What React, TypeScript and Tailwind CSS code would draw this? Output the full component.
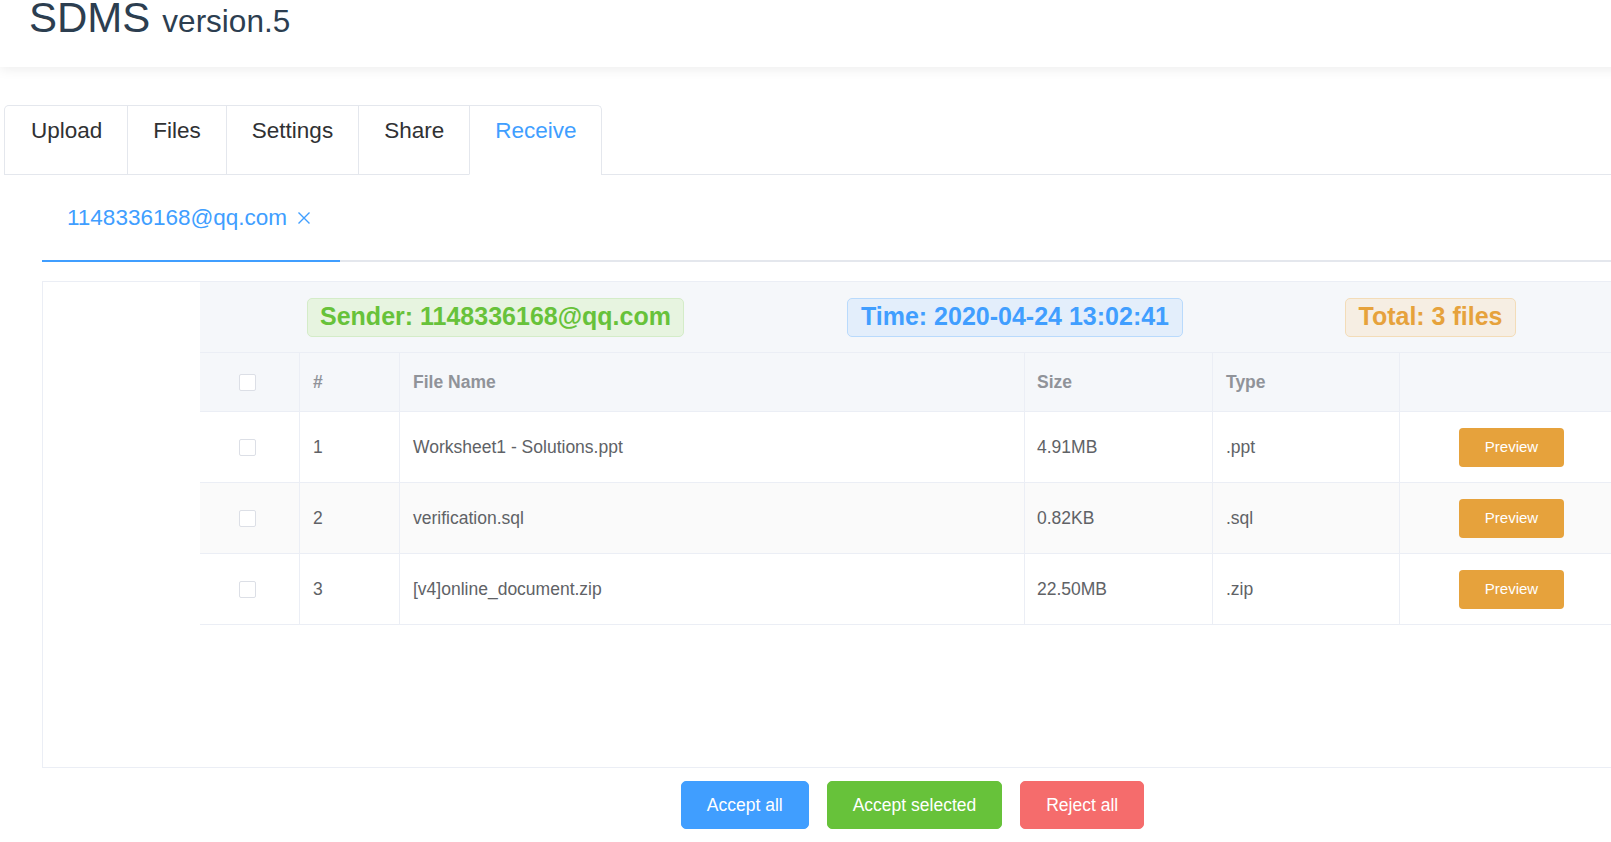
import React from 'react';

type FileRow = { id: number; name: string; size: string; type: string };

const files: FileRow[] = [
  { id: 1, name: 'Worksheet1 - Solutions.ppt', size: '4.91MB', type: '.ppt' },
  { id: 2, name: 'verification.sql', size: '0.82KB', type: '.sql' },
  { id: 3, name: '[v4]online_document.zip', size: '22.50MB', type: '.zip' },
];

const tabs = ['Upload', 'Files', 'Settings', 'Share', 'Receive'];

const Checkbox = () => (
  <span className="block w-[17px] h-[17px] rounded-[2px] border border-[#dcdfe6] bg-white" />
);

const App = () => {
  return (
    <div className="w-[1611px] h-[842px] overflow-hidden bg-white font-['Liberation_Sans',Arial,sans-serif]">
      <div className="w-[1825px]">
        {/* Header */}
        <header className="h-[67px] pl-[29px] flex items-start bg-white shadow-[0_2px_12px_0_rgba(0,0,0,0.08)] relative">
          <h1 className="flex items-baseline text-[#2c3e50]">
            <span className="text-[42px] leading-[36px]">SDMS</span>
            <span className="text-[31.5px] leading-[36px] ml-[12px]">version.5</span>
          </h1>
        </header>

        {/* Main tabs */}
        <div className="mt-[38px] ml-[4px]">
          <div className="flex border-b border-[#e4e7ed]">
            <div className="flex -mb-px border border-b-0 border-[#e4e7ed] rounded-t-[5px]">
              {tabs.map((t, i) => (
                <div
                  key={t}
                  className={`h-[69px] text-[22.5px] leading-[50px] border-b ${
                    i > 0 ? 'px-[25px] border-l border-l-[#e4e7ed]' : 'pl-[26px] pr-[25px]'
                  } ${t === 'Receive' ? 'text-[#409eff] border-b-white' : 'text-[#303133] border-b-transparent'}`}
                >
                  {t}
                </div>
              ))}
            </div>
          </div>

          <div className="pl-[38px]">
            {/* Nested tab */}
            <div className="flex border-b-2 border-[#e4e7ed]">
              <div className="-mb-[2px] h-[87px] border-b-2 border-[#409eff] pl-[25px] pr-[29px] flex items-center text-[22.5px] text-[#409eff]">
                <span>1148336168@qq.com</span>
                <svg className="ml-[10px]" width="14" height="14" viewBox="0 0 14 14" fill="none">
                  <path d="M1.5 1.5L12.5 12.5M12.5 1.5L1.5 12.5" stroke="#409eff" strokeWidth="1.4" />
                </svg>
              </div>
            </div>

            {/* Box */}
            <div className="mt-[19px] h-[487px] border border-[#ebeef5] flex">
              <div className="w-[157px] shrink-0" />
              <div className="flex-1">
                {/* Info tags */}
                <div className="h-[70px] bg-[#f5f7fa] flex items-center pl-[107px]">
                  <div className="w-[377px] h-[39px] rounded-[5px] border border-[#d4ecc8] bg-[#e7f4e0] flex items-center justify-center text-[25px] font-bold text-[#67c23a]">
                    Sender: 1148336168@qq.com
                  </div>
                  <div className="ml-[163px] w-[336px] h-[39px] rounded-[5px] border border-[#b9dafc] bg-[#e3eefb] flex items-center justify-center text-[25px] font-bold text-[#409eff]">
                    Time: 2020-04-24 13:02:41
                  </div>
                  <div className="ml-[162px] w-[171px] h-[39px] rounded-[5px] border border-[#f3dcb8] bg-[#f6eee3] flex items-center justify-center text-[25px] font-bold text-[#e6a23c]">
                    Total: 3 files
                  </div>
                </div>

                {/* Table header */}
                <div className="h-[60px] flex border-y border-[#ebeef5] bg-[#f5f7fa] text-[17.5px] font-bold text-[#909399]">
                  <div className="w-[100px] border-r border-[#ebeef5] flex items-center pl-[39px]">
                    <Checkbox />
                  </div>
                  <div className="w-[100px] border-r border-[#ebeef5] flex items-center pl-[13px]">#</div>
                  <div className="w-[625px] border-r border-[#ebeef5] flex items-center pl-[13px]">File Name</div>
                  <div className="w-[188px] border-r border-[#ebeef5] flex items-center pl-[12px]">Size</div>
                  <div className="w-[187px] border-r border-[#ebeef5] flex items-center pl-[13px]">Type</div>
                  <div className="w-[224px] border-r border-[#ebeef5]" />
                  <div className="flex-1" />
                </div>

                {/* Rows */}
                {files.map((f, i) => (
                  <div
                    key={f.id}
                    className={`h-[71px] flex border-b border-[#ebeef5] text-[17.5px] text-[#606266] ${
                      i === 1 ? 'bg-[#fafafa]' : 'bg-white'
                    }`}
                  >
                    <div className="w-[100px] border-r border-[#ebeef5] flex items-center pl-[39px]">
                      <Checkbox />
                    </div>
                    <div className="w-[100px] border-r border-[#ebeef5] flex items-center pl-[13px]">{f.id}</div>
                    <div className="w-[625px] border-r border-[#ebeef5] flex items-center pl-[13px]">{f.name}</div>
                    <div className="w-[188px] border-r border-[#ebeef5] flex items-center pl-[12px]">{f.size}</div>
                    <div className="w-[187px] border-r border-[#ebeef5] flex items-center pl-[13px]">{f.type}</div>
                    <div className="w-[224px] border-r border-[#ebeef5] flex items-center pl-[59px]">
                      <button className="w-[105px] h-[39px] rounded-[4px] bg-[#e6a23c] text-white text-[15px]">
                        Preview
                      </button>
                    </div>
                    <div className="flex-1" />
                  </div>
                ))}
              </div>
            </div>
          </div>
        </div>

        {/* Actions */}
        <div className="mt-[13px] flex justify-center gap-[18px] text-[17.5px] text-white">
          <button className="h-[48px] px-[25px] border border-[#409eff] bg-[#409eff] rounded-[5px]">Accept all</button>
          <button className="h-[48px] px-[25px] border border-[#67c23a] bg-[#67c23a] rounded-[5px]">Accept selected</button>
          <button className="h-[48px] px-[25px] border border-[#f56c6c] bg-[#f56c6c] rounded-[5px]">Reject all</button>
        </div>
      </div>
    </div>
  );
};

export default App;
